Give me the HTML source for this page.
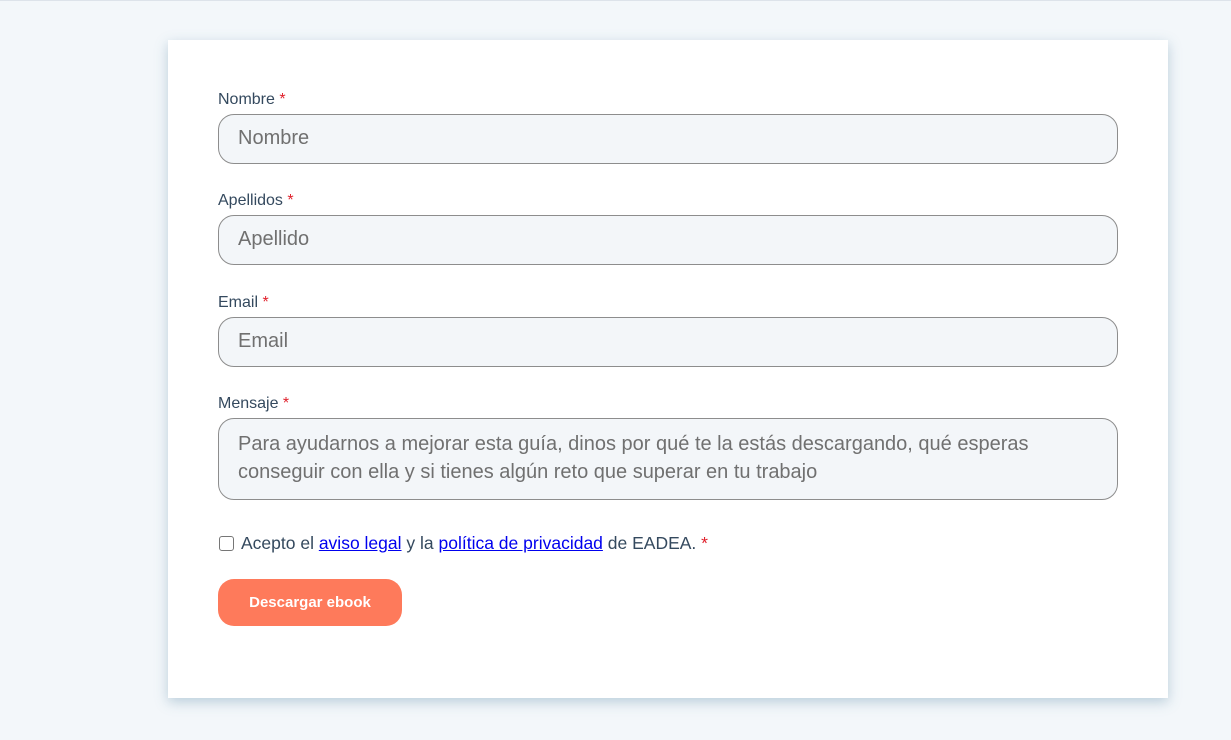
<!DOCTYPE html>
<html><head><meta charset="utf-8"><style>
html,body{margin:0;padding:0}
body{width:1231px;height:740px;background:#f3f7fa;font-family:"Liberation Sans",sans-serif;position:relative;overflow:hidden}
.topline{position:absolute;left:0;top:0;width:1231px;height:1px;background:#dde3ea}
.card{position:absolute;left:168px;top:40px;width:1000px;height:658px;background:#fff;box-shadow:0 4px 12px rgba(80,130,160,0.35)}
.lbl{position:absolute;left:50px;font-size:16px;color:#34495e}
.lbl span{color:#e0202b}
.inp{position:absolute;left:50px;width:900px;height:50px;border:1px solid #8d8d8d;border-radius:16px;background:#f3f6f9;box-sizing:border-box;padding-left:19px;font-size:20px;color:#707070;line-height:46px}
.ta{height:82px;line-height:28px;padding-top:11px}
.chk{position:absolute;left:51px;top:496px;width:13px;height:13px;border:1px solid #767676;border-radius:3px}
.acc{position:absolute;left:73px;top:493px;font-size:17.5px;color:#34495e}
.acc a{color:#0000ee;text-decoration:underline}
.acc span{color:#e0202b}
.btn{position:absolute;left:50px;top:539px;width:184px;height:47px;border-radius:16px;background:#fe7a5b;color:#fff;font-weight:bold;font-size:15px;text-align:center;line-height:48px}
</style></head><body>
<div class="topline"></div>
<div class="card">
<div class="lbl" style="top:51px">Nombre <span>*</span></div>
<div class="inp" style="top:74px">Nombre</div>
<div class="lbl" style="top:152px">Apellidos <span>*</span></div>
<div class="inp" style="top:175px">Apellido</div>
<div class="lbl" style="top:254px">Email <span>*</span></div>
<div class="inp" style="top:277px">Email</div>
<div class="lbl" style="top:355px">Mensaje <span>*</span></div>
<div class="inp ta" style="top:378px">Para ayudarnos a mejorar esta guía, dinos por qué te la estás descargando, qué esperas<br>conseguir con ella y si tienes algún reto que superar en tu trabajo</div>
<div class="chk"></div>
<div class="acc">Acepto el <a>aviso legal</a> y la <a>política de privacidad</a> de EADEA. <span>*</span></div>
<div class="btn">Descargar ebook</div>
</div>
</body></html>
